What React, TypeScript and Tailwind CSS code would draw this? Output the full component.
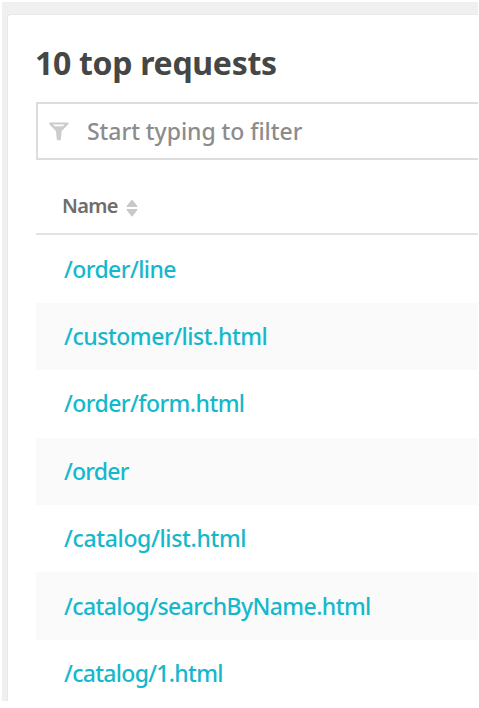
const requests = [
  { name: '/order/line', tracking: 'tracking-[-0.58px]' },
  { name: '/customer/list.html', tracking: 'tracking-[-0.46px]' },
  { name: '/order/form.html', tracking: 'tracking-[-0.56px]' },
  { name: '/order', tracking: 'tracking-[-0.8px]' },
  { name: '/catalog/list.html', tracking: 'tracking-[-0.35px]' },
  { name: '/catalog/searchByName.html', tracking: 'tracking-[-0.58px]' },
  { name: '/catalog/1.html', tracking: 'tracking-[-0.7px]' },
];

function FilterIcon() {
  return (
    <svg width="20" height="19" viewBox="0 0 20 19" fill="#cccccc">
      <path
        fillRule="evenodd"
        d="M.3.6h19v1.700l-6.600 6.700-1 9.200H7.900l-1-9.200L.3 2.300zM4 2.600l1.700 1.700h8.200l1.700-1.700z"
      />
    </svg>
  );
}

function SortIcon() {
  return (
    <svg width="12" height="18" viewBox="0 0 12 18" fill="#c8c8c8">
      <path d="M6 .5 11.300 6.800 11 8H1L.7 6.800zM6 17.700.7 11.200 1 10h10l.3 1.200z" />
    </svg>
  );
}

export default function App() {
  return (
    <div className="h-[708px] w-[479px] overflow-hidden bg-white pt-[2px] pr-px pb-[7px] pl-[2px] font-['Noto_Sans',sans-serif]">
      <div className="h-[699px] bg-[#f0f0f0] pt-[12px] pl-[5px]">
        <main className="h-[687px] rounded-tl-[4px] border-t border-l border-[#e9e9e9] bg-white pl-[28px]">
          <h1 className="-ml-px pt-[26px] text-[32px] leading-[44px] font-bold tracking-[-0.3px] whitespace-nowrap text-[#454646]">
            10 top requests
          </h1>
          <div className="mt-[17px] flex h-[58px] items-center border-y-2 border-l-2 border-[#dddddd] pl-[11px]">
            <FilterIcon />
            <span className="ml-[18px] text-[23px] font-medium tracking-[-0.05px] whitespace-nowrap text-[#8c8c8c]">Start typing to filter</span>
          </div>
          <div className="flex h-[74.500px] items-center border-b-2 border-[#e3e3e3] pt-[20px] pl-[26px]">
            <span className="text-[20px] leading-[28px] font-semibold tracking-[-0.7px] text-[#6d6d6d]">Name</span>
            <span className="ml-[8px] pt-[4px]"><SortIcon /></span>
          </div>
          <ul className="pt-px">
            {requests.map((r) => (
              <li key={r.name} className="flex h-[67.4px] items-center pb-px pl-[28px] even:bg-[#fafafa]">
                <a className={`text-[23px] leading-[32px] font-medium whitespace-nowrap text-[#14b8cc] ${r.tracking}`}>{r.name}</a>
              </li>
            ))}
          </ul>
        </main>
      </div>
    </div>
  );
}
